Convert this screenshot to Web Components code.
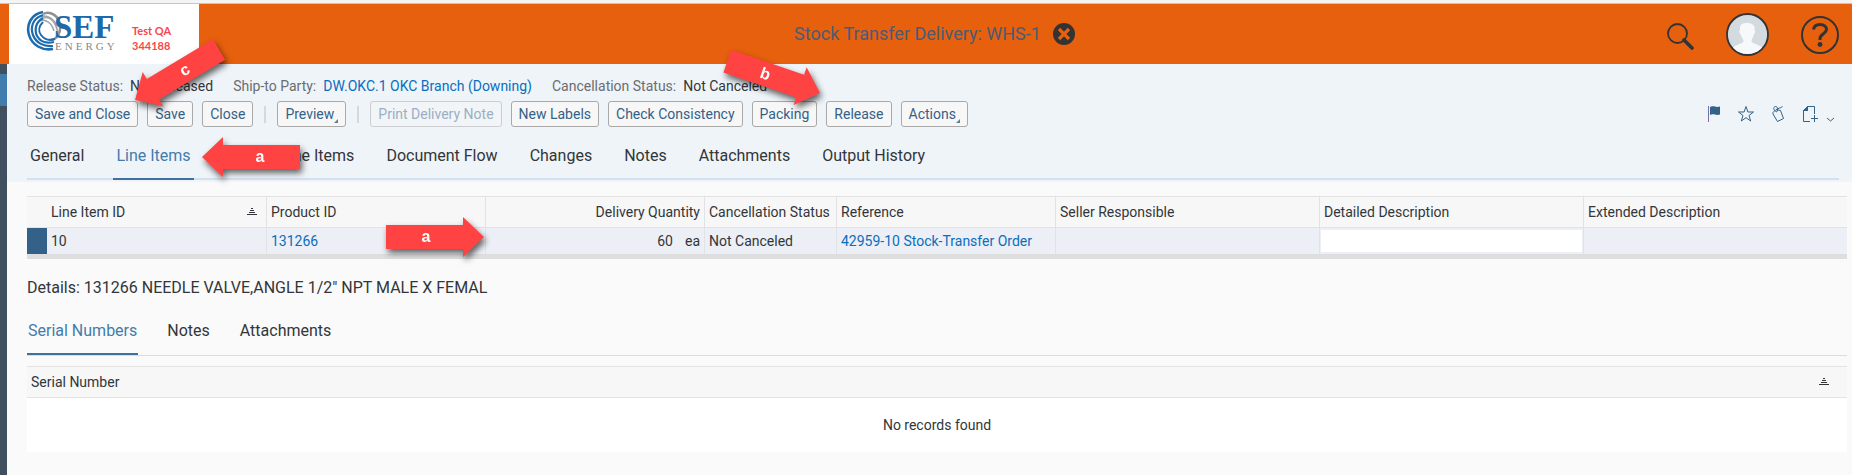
<!DOCTYPE html>
<html lang="en">
<head>
<meta charset="utf-8">
<title>Stock Transfer Delivery: WHS-1</title>
<style>
  html, body { margin: 0; min-height: 100%; }
  body { font-family: Roboto, "Open Sans", sans-serif; font-size: 14px; color: #32363a; background: #fafafa; }
</style>
</head>
<body>
<delivery-app></delivery-app>
<script>
function define(name, html, setup) {
  const template = document.createElement('template');
  template.innerHTML = html;
  customElements.define(name, class extends HTMLElement {
    connectedCallback() {
      if (this.shadowRoot) return;
      this.attachShadow({ mode: 'open' }).append(template.content.cloneNode(true));
      if (setup) setup(this, this.shadowRoot);
    }
  });
}

define('brand-logo', `
<style>
  :host { display: flex; box-sizing: border-box; width: 190px; height: 60px; padding: 6px 0 0 17px; gap: 14px; background: #fff; }
  svg { display: block; flex: none; }
  p { margin: 0; padding-top: 13px; font: bold 11px/15px Lato, sans-serif; color: #f8474c; }
</style>
<svg width="92" height="48" viewBox="0 0 92 48" role="img" aria-label="SEF Energy">
  <g fill="none">
    <path d="M17 4C24 0 33 6 34 15C35 23 31 29 25 30" stroke="#8d9094" stroke-width="2.500"/>
    <path d="M14 7C21 4 29 9 31 18M13 11C19 8 26 13 28 21M17 8C24 6 30 11 32 24" stroke="#a3a5a8" stroke-width="1.600"/>
    <path d="M17 2C5 4 0 15 3 25C6 35 16 41 27 39" stroke="#1c6cae" stroke-width="2.600"/>
    <path d="M17 5C7 8 4 17 7 25C10 33 18 37 27 36" stroke="#1c6cae" stroke-width="2.200"/>
    <path d="M17 8C10 12 8 19 11 26C14 31 20 34 28 32" stroke="#1c6cae" stroke-width="2.200"/>
    <path d="M17 12C13 16 12 21 15 25C18 29 23 31 29 29" stroke="#1c6cae" stroke-width="2"/>
  </g>
  <text x="28" y="28" font-family="Liberation Serif, serif" font-weight="bold" font-size="33" fill="#1d69a9">SEF</text>
  <text x="29" y="40" font-family="Liberation Serif, serif" font-size="11" letter-spacing="3" fill="#85878b">ENERGY</text>
</svg>
<p>Test QA<br>344188</p>`);

define('shell-header', `
<style>
  :host { display: grid; grid-template-columns: 1fr auto 1fr; align-items: center; height: 60px; padding: 0 9px; border-top: 1px solid #c8c4c4; background: #e6600d; }
  .title { display: flex; align-items: center; gap: 12px; padding-left: 17px; }
  h1 { margin: 0; font-size: 18px; line-height: 22px; font-weight: 400; color: #4d5b73; }
  button { padding: 0; border: 0; background: none; display: block; }
  svg { display: block; }
  nav { display: flex; justify-content: flex-end; align-items: center; gap: 32px; padding-right: 4px; }
  .search { margin-top: 4px; }
  .help { margin-top: 2px; }
</style>
<brand-logo></brand-logo>
<div class="title">
  <h1>Stock Transfer Delivery: WHS-1</h1>
  <button aria-label="Close tab"><svg width="22" height="22" viewBox="0 0 22 22"><circle cx="11" cy="11" r="11" fill="#333"/><path d="M6 6l10 10M16 6L6 16" stroke="#e6600d" stroke-width="3.200"/></svg></button>
</div>
<nav>
  <button class="search" aria-label="Search"><svg width="27" height="27" viewBox="0 0 27 27" fill="none" stroke="#333"><circle cx="10.500" cy="10.500" r="9.500" stroke-width="1.800"/><path d="M17 17l8 8" stroke-width="3.600" stroke-linecap="round"/></svg></button>
  <button aria-label="User profile"><svg width="43" height="43" viewBox="0 0 43 43"><circle cx="21.500" cy="21.500" r="20.500" fill="#d3dae0" stroke="#333" stroke-width="1.800"/><path d="M7 34.500C10 31 17.500 31 17.500 28C17.500 26 15 24 14.500 21C13 21 13 17 14.200 16.500C13 11 17 10 21.500 10C26 10 29.500 12 28.500 17C29.500 18 29 21 28 21C27.500 24 25.500 26 25.500 28C25.500 31 33 31 36 34.500C29 43 14 43 7 34.500Z" fill="#f6f8fa"/></svg></button>
  <button class="help" aria-label="Help"><svg width="38" height="38" viewBox="0 0 38 38" fill="none" stroke="#333"><circle cx="19" cy="19" r="18" stroke-width="2"/><path d="M12.500 13.500C13 10.500 15.500 8.500 19 8.500C23 8.500 25.500 10.500 25.500 13.500C25.500 17.500 19 18 19 22.500V24" stroke-width="3"/><circle cx="19" cy="28.500" r="2.400" fill="#333" stroke="none"/></svg></button>
</nav>`);

define('side-rail', `
<style>
  :host { display: block; width: 7px; flex: none; padding-top: 10px; box-sizing: border-box; background: #41505f; }
  div { height: 32px; background: #427cac; }
</style><div></div>`);

define('status-field', `
<style>
  :host { display: flex; gap: 7px; line-height: 18px; white-space: nowrap; }
  span { color: #6a6d70; }
</style>
<span><slot name="label"></slot></span><slot></slot>`);

define('action-button', `
<style>
  :host { display: block; }
  button { display: block; position: relative; height: 26px; padding: 0 7px; border: 1px solid #a9a9a9; border-radius: 3px; background: #f7f7f7; color: #346187; font: inherit; line-height: 24px; white-space: nowrap; }
  button:disabled { color: #9aafc3; border-color: #cbcdd0; background: #f2f5f8; }
  svg { display: none; position: absolute; right: 7px; bottom: 3px; }
  :host([menu]) svg { display: block; }
  :host([menu]) button { padding-right: 11px; }
</style>
<button><slot></slot><svg width="4" height="4" viewBox="0 0 4 4"><path d="M4 0V4H0Z" fill="#5b7f9f"/></svg></button>`,
(host, root) => { root.querySelector('button').disabled = host.hasAttribute('disabled'); });

define('record-tools', `
<style>
  :host { display: flex; align-items: center; gap: 14px; margin-left: auto; padding-right: 13px; }
  button { padding: 0; border: 0; background: none; display: block; }
  svg { display: block; fill: none; stroke: #346187; }
  .more { display: flex; align-items: flex-end; gap: 7px; }
</style>
<button aria-label="Flag"><svg width="18" height="18" viewBox="0 0 18 18"><path d="M3.500 1V17" stroke="#7d6da8"/><path d="M5 2C8 0 11 3 15 1.500V9.500C11 11 8 8 5 10Z" fill="#346187" stroke="none"/></svg></button>
<button aria-label="Favorite"><svg width="18" height="18" viewBox="0 0 18 18"><path d="M9 1.500L10.900 7H16.500L12 10.500L13.700 16L9 12.700L4.300 16L6 10.500L1.500 7H7.100Z"/></svg></button>
<button aria-label="Tag"><svg width="18" height="18" viewBox="0 0 18 18"><path d="M4 7.500L7 4.500L11.500 5.500L14.500 13.500L8.500 16.500L4 9Z"/><path d="M7.500 7C4 5 4 2 6.500 1.500C9 1 9 6 7.500 7M8.500 5C9 2 11 4 13.500 1.500"/></svg></button>
<div class="more">
<button aria-label="New document"><svg width="18" height="18" viewBox="0 0 18 18"><path d="M13.500 9V1.500H6.500L2.500 5.500V16.500H9M2.500 5.500H6.500V1.500M13.500 10V17M10 13.500H17"/><path d="M2.500 5.500L6.500 1.500V5.500Z" fill="#346187"/></svg></button>
<button aria-label="More options"><svg width="9" height="6" viewBox="0 0 9 6"><path d="M1 1L4.500 4L8 1"/></svg></button>
</div>`);

define('tab-strip', `
<style>
  :host { display: block; }
  div { display: flex; gap: var(--tab-gap, 26px); margin-right: var(--strip-inset, 9px); border-bottom: var(--rule, 2px solid #d1e1ef); }
</style>
<div role="tablist"><slot></slot></div>`);

define('tab-item', `
<style>
  :host { display: block; margin-bottom: var(--overlap, -2px); }
  button { display: block; box-sizing: border-box; height: 35px; padding: 0 var(--tab-pad, 3px) 11px; border: 0; border-bottom: 2px solid transparent; background: none; font: inherit; font-size: 16px; line-height: 20px; color: #32363a; white-space: nowrap; }
  :host([active]) button { color: #427cac; border-color: #3f719e; }
</style>
<button role="tab"><slot></slot></button>`,
(host, root) => root.querySelector('button').setAttribute('aria-selected', host.hasAttribute('active')));

const gridStyle = `
  :host { display: block; }
  table { width: 100%; border-collapse: separate; border-spacing: 0; table-layout: fixed; line-height: 20px; }
  th { box-sizing: border-box; height: 32px; padding: 0 4px; border: solid #e3e3e3; border-width: 1px 0; background: #f7f7f7; font-weight: 400; text-align: left; white-space: nowrap; }
  svg { display: block; stroke: #32363a; }
  .head { display: flex; justify-content: space-between; align-items: center; padding-right: 5px; }
`;
const sortIcon = `<svg width="10" height="8" viewBox="0 0 10 8" aria-hidden="true"><path d="M4 .5H6M3 2.500H7M2 4.500H8M0 6.500H10"/></svg>`;

define('line-items-grid', `
<style>${gridStyle}
  table { border-bottom: 5px solid #dedede; }
  th + th, td + td { border-right: 1px solid #e0e2e5; }
  th:last-child, td:last-child { border-right: 0; }
  td { box-sizing: border-box; height: 26px; padding: 0 4px; background: #eceff5; white-space: nowrap; }
  .mark { background: #346187; padding: 0; }
  .num { text-align: right; }
  .num span { margin-left: 12px; }
  .field { padding: 0 1px; }
  a { color: #0a6ebd; text-decoration: none; }
  input { display: block; box-sizing: border-box; width: 100%; height: 22px; border: 0; padding: 0 4px; background: #fff; font: inherit; }
  .s { width: 20px; } .i { width: 220px; } .m { width: 219px; } .c { width: 132px; } .l { width: 264px; }
</style>
<table>
  <colgroup><col class="s"><col class="i"><col class="m"><col class="m"><col class="c"><col class="m"><col class="l"><col class="l"><col></colgroup>
  <thead><tr><th></th><th><div class="head">Line Item ID ${sortIcon}</div></th><th>Product ID</th><th class="num">Delivery Quantity</th><th>Cancellation Status</th><th>Reference</th><th>Seller Responsible</th><th id="dd">Detailed Description</th><th>Extended Description</th></tr></thead>
  <tbody><tr><td class="mark"></td><td>10</td><td><a href="#">131266</a></td><td class="num">60<span>ea</span></td><td>Not Canceled</td><td><a href="#">42959-10 Stock-Transfer Order</a></td><td></td><td class="field"><input type="text" aria-labelledby="dd"></td><td></td></tr></tbody>
</table>`);

define('serial-grid', `
<style>${gridStyle}
  td { box-sizing: border-box; height: 54px; background: #fff; text-align: center; }
  .head { padding-right: 14px; }
</style>
<table>
  <thead><tr><th><div class="head">Serial Number ${sortIcon}</div></th></tr></thead>
  <tbody><tr><td>No records found</td></tr></tbody>
</table>`);

define('callout-arrow', `
<style>
  :host { position: absolute; width: 0; height: 0; pointer-events: none; }
  svg { display: block; width: 1px; height: 1px; overflow: visible; filter: drop-shadow(2px 4px 3px rgba(0,0,0,.6)); }
  text { font: bold 16px "Liberation Sans", sans-serif; fill: #fff; text-anchor: middle; }
</style>
<svg><g class="arrow"><path d="M0 0L-21 -20V-12H-98V12H-21V20Z" fill="#ff4343"/><g class="label"><text y="5"></text></g></g></svg>`,
(host, root) => {
  const angle = Number(host.getAttribute('angle'));
  const turned = Math.abs(angle) > 90 ? 180 : 0;
  host.style.left = host.getAttribute('x') + 'px';
  host.style.top = host.getAttribute('y') + 'px';
  root.querySelector('.arrow').setAttribute('transform', 'rotate(' + angle + ')');
  root.querySelector('.label').setAttribute('transform', 'translate(-58 0) rotate(' + turned + ')');
  root.querySelector('text').textContent = host.textContent;
});

define('delivery-app', `
<style>
  :host { display: flex; flex-direction: column; position: relative; min-height: 100vh; padding-top: 3px; box-sizing: border-box; background: #f4f4f4; overflow: hidden; }
  .body { display: flex; flex: 1; }
  main { flex: 1; min-width: 0; background: #fafafa; }
  .top { background: #eff4f9; padding: 13px 4px 2px 20px; }
  .status { display: flex; gap: 20px; }
  .status a { color: #0a6ebd; text-decoration: none; }
  .bar { display: flex; align-items: center; gap: 9px; margin: 6px 0 18px; }
  .bar i { width: 2px; height: 17px; background: #d5d9de; margin: 0 2px; }
  .content { padding: 14px 5px 0 20px; }
  h2 { margin: 19px 0 22px; font-size: 16px; line-height: 20px; font-weight: 400; }
  .details { --rule: 1px solid #d3dee6; --strip-inset: 0px; --overlap: 0px; --tab-pad: 1px; --tab-gap: 28px; margin-bottom: 10px; }
</style>
<shell-header></shell-header>
<div class="body">
  <side-rail></side-rail>
  <main>
    <section class="top">
      <div class="status">
        <status-field><span slot="label">Release Status:</span>Not Released</status-field>
        <status-field><span slot="label">Ship-to Party:</span><a href="#">DW.OKC.1 OKC Branch (Downing)</a></status-field>
        <status-field><span slot="label">Cancellation Status:</span>Not Canceled</status-field>
      </div>
      <div class="bar">
        <action-button>Save and Close</action-button>
        <action-button>Save</action-button>
        <action-button>Close</action-button>
        <i></i>
        <action-button menu>Preview</action-button>
        <i></i>
        <action-button disabled>Print Delivery Note</action-button>
        <action-button>New Labels</action-button>
        <action-button>Check Consistency</action-button>
        <action-button>Packing</action-button>
        <action-button>Release</action-button>
        <action-button menu>Actions</action-button>
        <record-tools></record-tools>
      </div>
      <tab-strip>
        <tab-item>General</tab-item>
        <tab-item active>Line Items</tab-item>
        <tab-item>Related Line Items</tab-item>
        <tab-item>Document Flow</tab-item>
        <tab-item>Changes</tab-item>
        <tab-item>Notes</tab-item>
        <tab-item>Attachments</tab-item>
        <tab-item>Output History</tab-item>
      </tab-strip>
    </section>
    <section class="content">
      <line-items-grid></line-items-grid>
      <h2>Details: 131266 NEEDLE VALVE,ANGLE 1/2" NPT MALE X FEMAL</h2>
      <tab-strip class="details">
        <tab-item active>Serial Numbers</tab-item>
        <tab-item>Notes</tab-item>
        <tab-item>Attachments</tab-item>
      </tab-strip>
      <serial-grid></serial-grid>
    </section>
  </main>
</div>
<callout-arrow x="202" y="157" angle="180">a</callout-arrow>
<callout-arrow x="484" y="237" angle="0">a</callout-arrow>
<callout-arrow x="820" y="93" angle="19">b</callout-arrow>
<callout-arrow x="135" y="100" angle="149">c</callout-arrow>`);
</script>
</body>
</html>
